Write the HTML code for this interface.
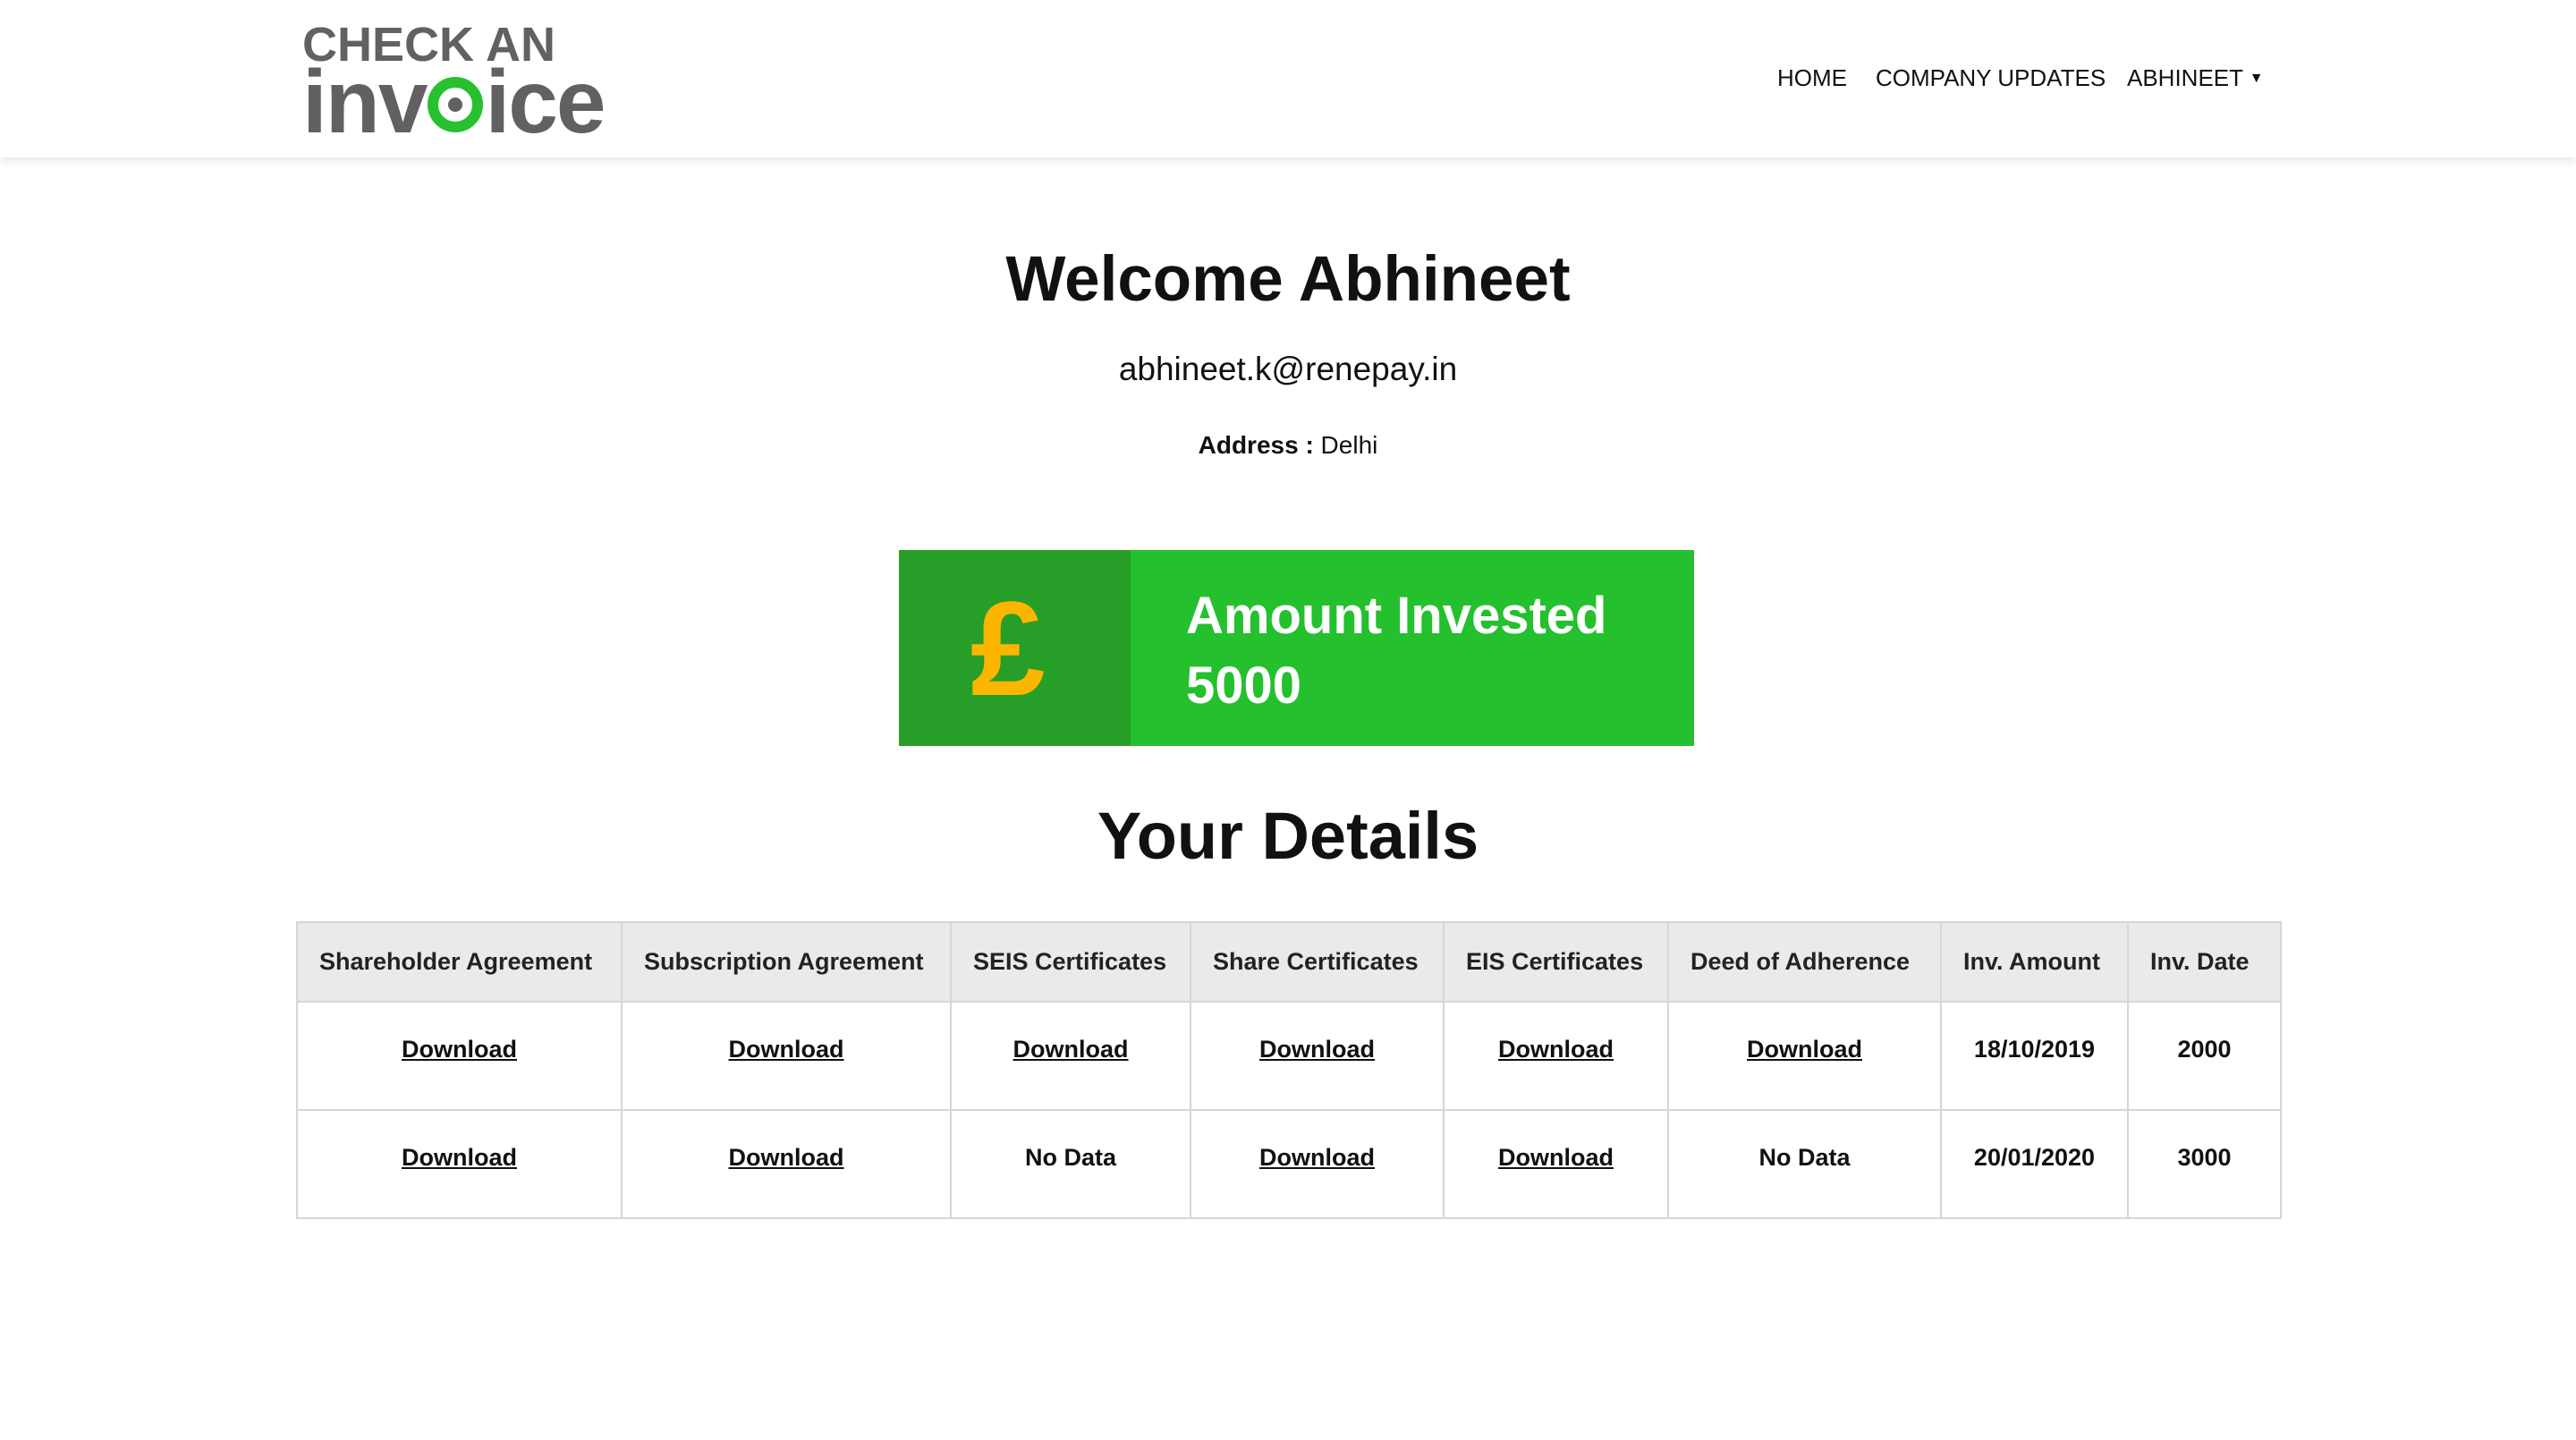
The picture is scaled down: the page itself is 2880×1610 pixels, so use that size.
<!DOCTYPE html>
<html><head><meta charset="utf-8"><style>
*{margin:0;padding:0;box-sizing:border-box}
body{width:2880px;height:1610px;background:#fff;font-family:"Liberation Sans",sans-serif;color:#111;position:relative;overflow:hidden}
.hdr{position:absolute;left:0;top:0;width:2880px;height:176px;background:#fff;box-shadow:0 4px 10px rgba(0,0,0,.1)}
.logo1{position:absolute;left:338px;top:20px;font-size:54px;font-weight:bold;color:#616164;line-height:60px}
.logo2{position:absolute;left:338px;top:74px;font-size:100px;font-weight:bold;color:#616164;letter-spacing:-2px;line-height:80px}
.nav{position:absolute;top:72px;font-size:26px;color:#111}
.c{position:absolute;left:0;width:2880px;text-align:center}
.box{position:absolute;left:1005px;top:615px;width:889px;height:219px;background:#24c02e}
.box .d{position:absolute;left:0;top:0;width:259px;height:219px;background:#279e27}
.box .p{position:absolute;left:80px;top:35px;font-size:150px;font-weight:bold;color:#fdb600;line-height:150px}
.box .t{position:absolute;left:321px;color:#fff;font-size:58px;font-weight:bold}
table{position:absolute;left:331px;top:1030px;border-collapse:collapse;font-size:27px}
td,th{border:2px solid #d6d6d6;height:121px;text-align:center;padding-bottom:14px}
th{height:89px;background:#e9eaec;text-align:left;padding:0 0 0 24px;font-weight:bold;font-size:27px;color:#222}
td a{color:#111;text-decoration:underline;font-weight:bold}
</style></head><body>
<div class="hdr">
<div class="logo1">CHECK AN</div>
<div class="logo2">inv<span style="position:relative;display:inline-block;width:62px;height:62px;border:12px solid #27c12f;border-radius:50%;vertical-align:0px;margin:0 2px"><span style="position:absolute;left:11px;top:11px;width:16px;height:16px;border-radius:50%;background:#616164"></span></span>ice</div>
<div class="nav" style="left:1987px">HOME</div>
<div class="nav" style="left:2097px">COMPANY UPDATES</div>
<div class="nav" style="left:2378px">ABHINEET <span style="font-size:16px;position:relative;top:-4px">▼</span></div>
</div>
<div class="c" style="top:272px;font-size:71px;font-weight:bold">Welcome Abhineet</div>
<div class="c" style="top:392px;font-size:37px">abhineet.k@renepay.in</div>
<div class="c" style="top:482px;font-size:28px"><b>Address :</b> Delhi</div>
<div class="box"><div class="d"></div><div class="p">£</div>
<div class="t" style="top:40px">Amount Invested</div>
<div class="t" style="top:118px">5000</div></div>
<div class="c" style="top:892px;font-size:74px;font-weight:bold">Your Details</div>
<table>
<tr><th style="width:363px">Shareholder Agreement</th><th style="width:368px">Subscription Agreement</th><th style="width:268px">SEIS Certificates</th><th style="width:283px">Share Certificates</th><th style="width:251px">EIS Certificates</th><th style="width:305px">Deed of Adherence</th><th style="width:209px">Inv. Amount</th><th style="width:171px">Inv. Date</th></tr>
<tr><td><a>Download</a></td><td><a>Download</a></td><td><a>Download</a></td><td><a>Download</a></td><td><a>Download</a></td><td><a>Download</a></td><td><b>18/10/2019</b></td><td><b>2000</b></td></tr>
<tr><td><a>Download</a></td><td><a>Download</a></td><td><b>No Data</b></td><td><a>Download</a></td><td><a>Download</a></td><td><b>No Data</b></td><td><b>20/01/2020</b></td><td><b>3000</b></td></tr>
</table>
</body></html>
